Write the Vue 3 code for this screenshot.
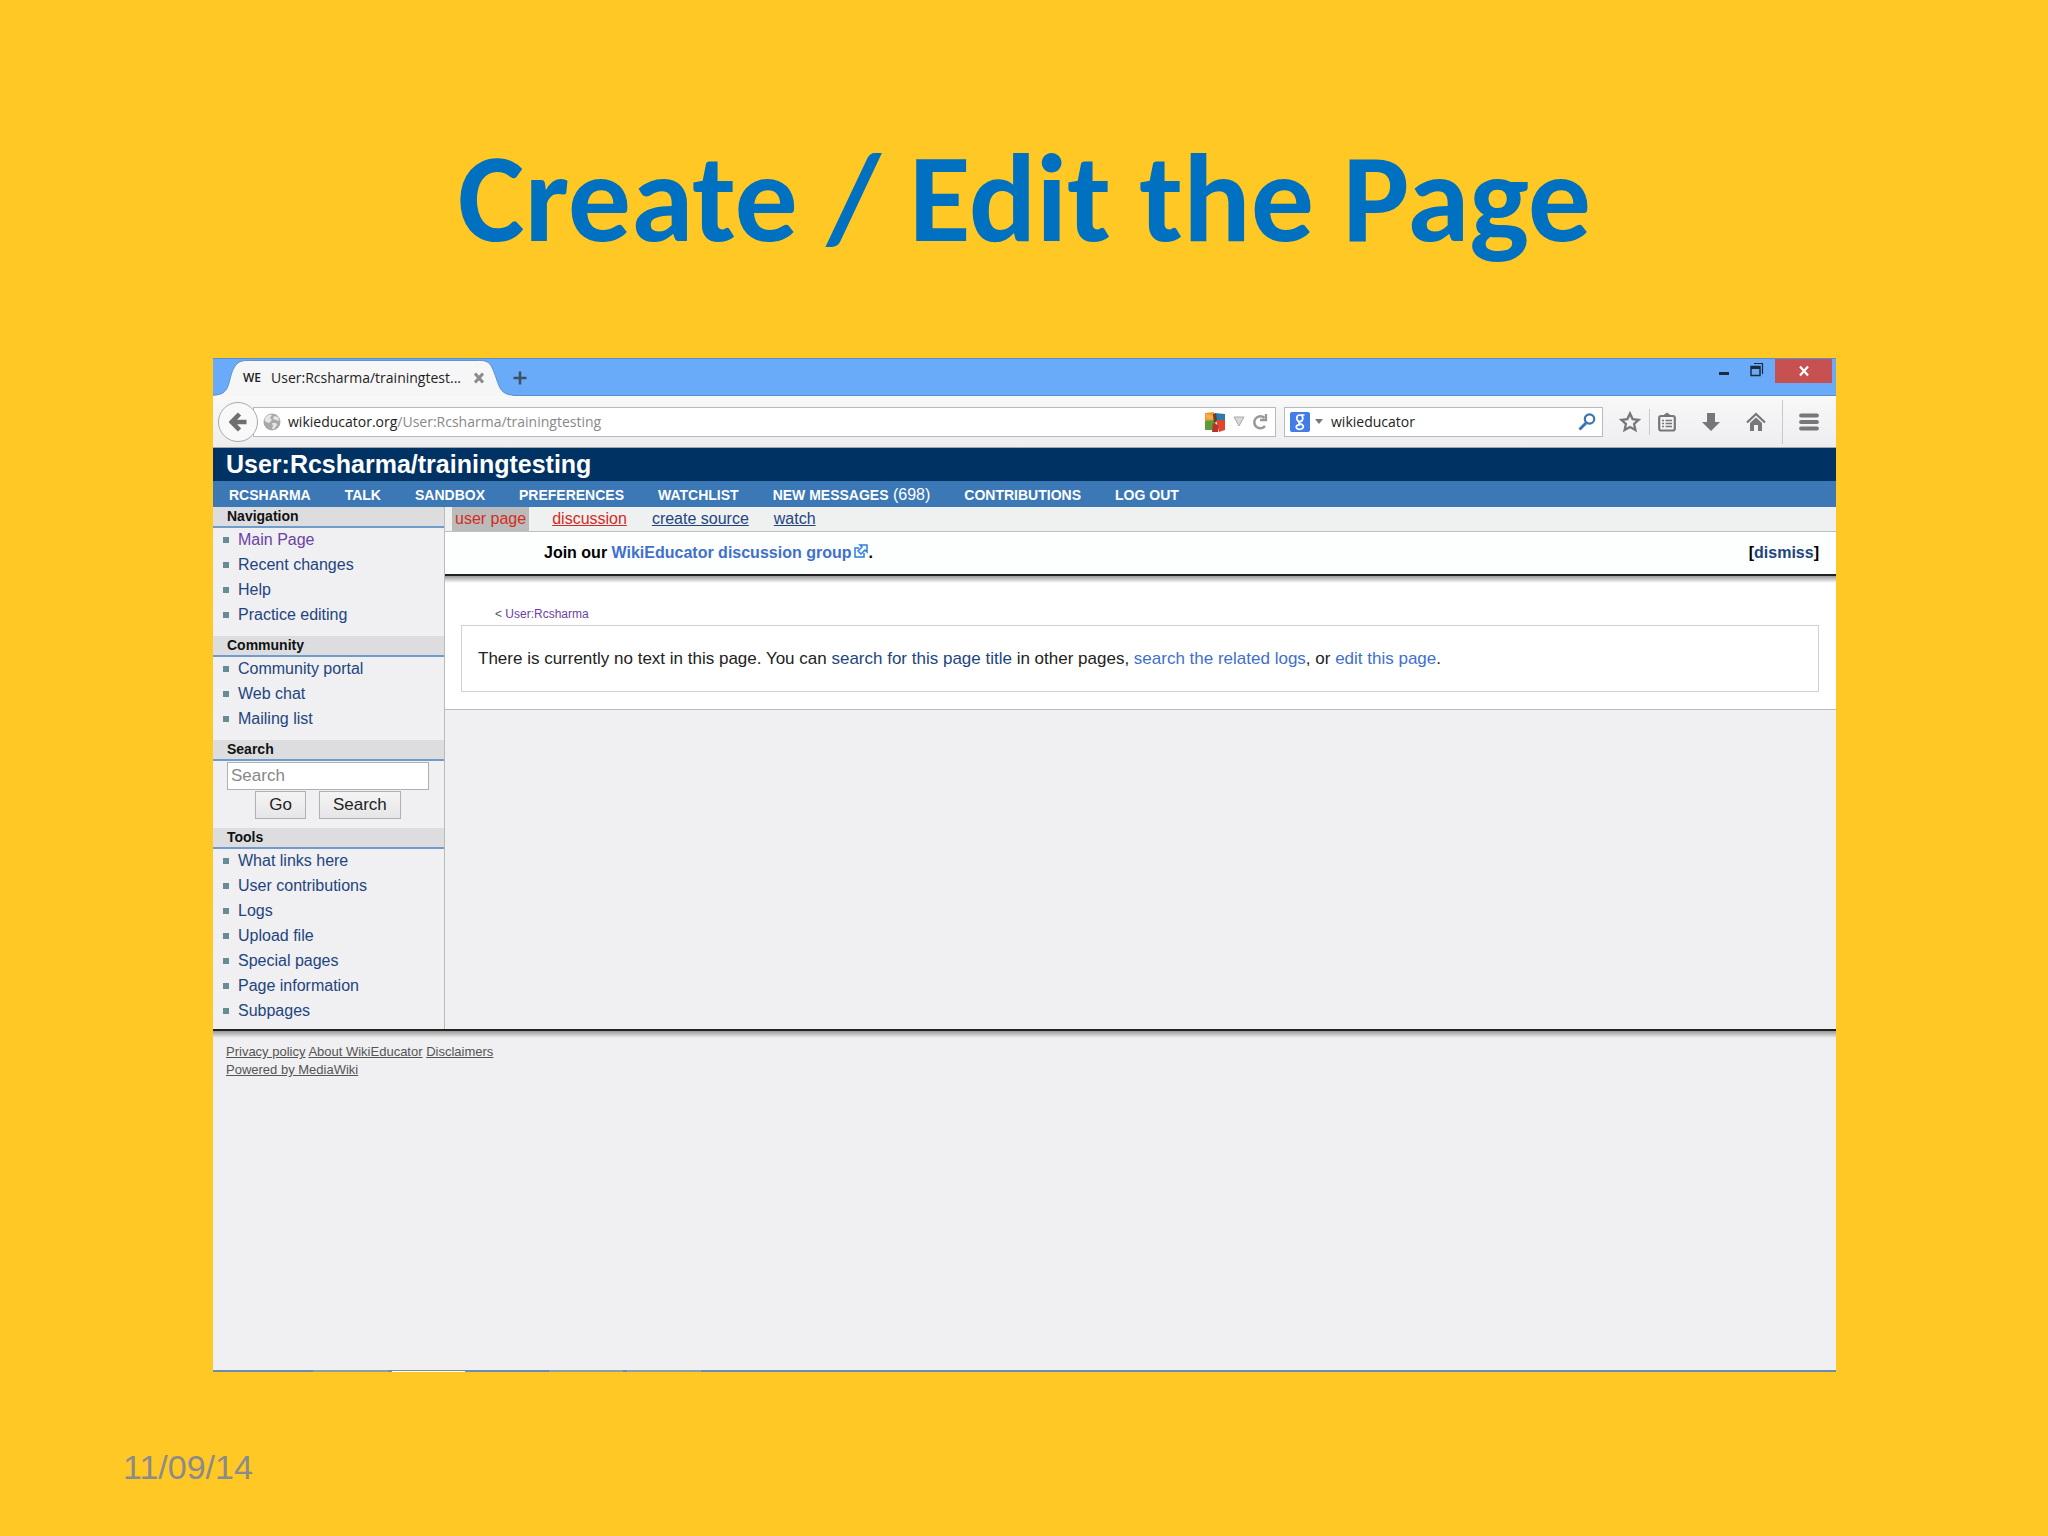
<script setup>
import { ref } from 'vue';

const engineQuery = ref('wikieducator');
const wikiQuery = ref('');

const personal = ['RCSHARMA', 'TALK', 'SANDBOX', 'PREFERENCES', 'WATCHLIST', 'NEW MESSAGES', 'CONTRIBUTIONS', 'LOG OUT'];

const navigation = ['Main Page', 'Recent changes', 'Help', 'Practice editing'];
const community = ['Community portal', 'Web chat', 'Mailing list'];
const tools = ['What links here', 'User contributions', 'Logs', 'Upload file', 'Special pages', 'Page information', 'Subpages'];

// top edge of the taskbar, one entry per visible button or gap
const taskbar = [
  { grow: 100, kind: 'dark' },
  { grow: 75, kind: 'light' },
  { grow: 4, kind: 'dark' },
  { grow: 73, kind: 'white' },
  { grow: 84, kind: 'dark' },
  { grow: 74, kind: 'light' },
  { grow: 4, kind: 'dark' },
  { grow: 74, kind: 'light' },
  { grow: 1135, kind: 'dark' },
];
</script>

<template>
  <main class="slide">
    <h1 class="slide-title">Create / Edit the Page</h1>

    <section class="window">
      <div class="titlebar">
        <div class="tab">
          <svg class="tab-shape" viewBox="0 0 306 38" preserveAspectRatio="none" aria-hidden="true">
            <path d="M0 37.500C18 37 15 24 20 12C24 3 28 1.500 36 1.500H272C280 1.500 283 4 286 12C292 26 291 36 306 37.500V38H0Z" fill="#f6f6f7" />
            <path d="M0 37C18 37 15 24 20 12C24 3 28 1.500 36 1.500H272C280 1.500 283 4 286 12C292 26 291 36 306 37" fill="none" stroke="#5c8fca" />
          </svg>
          <span class="favicon">WE</span>
          <span class="tab-label">User:Rcsharma/trainingtest...</span>
          <button class="bare tab-close" aria-label="Close tab">
            <svg width="12" height="12" viewBox="0 0 12 12"><path d="M2 1.500L10 10.500M10 1.500L2 10.500" stroke="#8b8b8b" stroke-width="3" /></svg>
          </button>
        </div>
        <button class="bare new-tab" aria-label="New tab">
          <svg width="14" height="14" viewBox="0 0 14 14"><path d="M7 0.500V13.500M0.500 7H13.500" stroke="#3c5066" stroke-width="2.500" /></svg>
        </button>
        <div class="controls">
          <button class="bare minimize" aria-label="Minimize">
            <svg width="12" height="24" viewBox="0 0 12 24"><path d="M1 14.500H11" stroke="#1d2b3d" stroke-width="3" /></svg>
          </button>
          <button class="bare" aria-label="Restore">
            <svg width="14" height="24" viewBox="0 0 14 24" fill="none" stroke="#1d2b3d"><path d="M4 4.500H12.500V15" stroke-width="1.200" /><path d="M1 7.500H10V16.500H1Z" stroke-width="1.500" /><path d="M1 8.500H10" stroke-width="3" /></svg>
          </button>
          <button class="bare close" aria-label="Close window">
            <svg width="12" height="12" viewBox="0 0 12 12"><path d="M2 1.500L10 10.500M10 1.500L2 10.500" stroke="#fff" stroke-width="2.200" /></svg>
          </button>
        </div>
      </div>

      <div class="toolbar">
        <button class="bare back" aria-label="Back">
          <svg width="18" height="20" viewBox="0 0 18 20"><path d="M10.500 2L2.800 10L10.500 18M4 10H17.500" fill="none" stroke="#6f6f72" stroke-width="4.600" /></svg>
        </button>
        <div class="field url">
          <svg width="18" height="18" viewBox="0 0 18 18"><circle cx="9" cy="9" r="8.500" fill="#a9a9ab" /><path d="M2 5C5 1 8 1 9 2L7 5L9 7L6 10L3 9L1.500 7ZM11 3L15 4L16.500 8L13 7L10 6ZM9 10L13 10L14 12L11 16L9 16L10 13Z" fill="#e6e6e7" /></svg>
          <span class="url-text">wikieducator.org<span>/User:Rcsharma/trainingtesting</span></span>
          <svg width="21" height="20" viewBox="0 0 21 20"><path d="M0 1L9 0V9L0 10Z" fill="#ee9830" /><path d="M10 1L20 2V9L11 8Z" fill="#2a7cac" /><path d="M11 8L20 8V18L14 20Z" fill="#e2452c" /><path d="M0 9L10 8L12 18L0 18Z" fill="#5b9b38" /><path d="M8 11L13 13L13 20H7Z" fill="#b3352a" /><path d="M8 2L11 1L12 9L9 11Z" fill="#6b3b30" /><path d="M1 2L8 4L7 8L1 6Z" fill="#f4b04a" /></svg>
          <svg width="12" height="11" viewBox="0 0 12 11"><path d="M1 1H11L6 10Z" fill="#d8d8d8" stroke="#aaa" /></svg>
          <button class="bare" aria-label="Reload">
            <svg width="16" height="16" viewBox="0 0 16 16" fill="none" stroke="#98989b" stroke-width="2.500"><path d="M13 12A6 6 0 1 1 12.500 4" /><path d="M14 0V6H8" stroke-width="2.300" /></svg>
          </button>
        </div>
        <div class="field engine">
          <svg width="20" height="20" viewBox="0 0 20 20"><rect width="20" height="20" rx="2" fill="#437be8" /><g fill="none" stroke="#fff" stroke-width="1.700"><ellipse cx="9.800" cy="6.300" rx="3" ry="3.300" /><path d="M11 3H14.500M9.500 9.600C7.500 11 10 11.500 11.500 12.300C15 14.500 13 17.500 9.500 17.300C5 17 5 12.800 10.500 12.600" /></g></svg>
          <svg width="8" height="5" viewBox="0 0 8 5"><path d="M0 0H8L4 5Z" fill="#77777a" /></svg>
          <input v-model="engineQuery" type="text" aria-label="Search with Google" />
          <button class="bare" aria-label="Start search">
            <svg width="18" height="18" viewBox="0 0 18 18" fill="none" stroke="#3b73b5"><circle cx="11.500" cy="6" r="4.700" stroke-width="2.200" /><path d="M8 10L1.500 16.500" stroke-width="3" /></svg>
          </button>
        </div>
        <div class="actions">
          <button class="bare" aria-label="Bookmark">
            <svg width="22" height="22" viewBox="0 0 22 22"><path d="M11 2.500L13.600 8.100L19.600 8.800L15.100 12.900L16.400 19L11 16L5.600 19L6.900 12.900L2.400 8.800L8.400 8.100Z" fill="none" stroke="#77777a" stroke-width="2.300" /></svg>
          </button>
          <i class="divider short"></i>
          <button class="bare" aria-label="Bookmarks list">
            <svg width="18" height="20" viewBox="0 0 18 20" fill="none" stroke="#77777a" stroke-width="2.200"><rect x="1.200" y="4" width="15.600" height="14.500" rx="2" /><path d="M5 4L9 1L13 4Z" fill="#77777a" stroke-width="1" /><path d="M4 8.500H6M7.500 8.500H14M4 11.500H6M7.500 11.500H14M4 14.500H6M7.500 14.500H14" stroke-width="1.600" /></svg>
          </button>
          <button class="bare download" aria-label="Downloads">
            <svg width="18" height="20" viewBox="0 0 18 20"><path d="M5 1H13V10H18L9 19L0 10H5Z" fill="#77777a" /></svg>
          </button>
          <button class="bare home" aria-label="Home">
            <svg width="20" height="20" viewBox="0 0 20 20"><path d="M1 10.500L10 2L19 10.500" fill="none" stroke="#77777a" stroke-width="2.300" /><path d="M4 11L10 5.500L16 11V19H12V13H8V19H4Z" fill="#77777a" /></svg>
          </button>
          <i class="divider"></i>
          <button class="bare" aria-label="Menu">
            <svg width="20" height="18" viewBox="0 0 20 18"><path d="M2 2.500H18M2 9H18M2 15.500H18" stroke="#77777a" stroke-width="3.800" stroke-linecap="round" /></svg>
          </button>
        </div>
      </div>

      <h2 class="page-name">User:Rcsharma/trainingtesting</h2>
      <nav class="personal">
        <a v-for="item in personal" :key="item" href="#">{{ item }}<span v-if="item === 'NEW MESSAGES'"> (698)</span></a>
      </nav>

      <div class="columns">
        <aside class="sidebar">
          <h3>Navigation</h3>
          <ul>
            <li v-for="item in navigation" :key="item"><a href="#" :class="{ visited: item === 'Main Page' }">{{ item }}</a></li>
          </ul>
          <h3>Community</h3>
          <ul>
            <li v-for="item in community" :key="item"><a href="#">{{ item }}</a></li>
          </ul>
          <h3><label for="wiki-search">Search</label></h3>
          <form class="search" @submit.prevent>
            <input id="wiki-search" v-model="wikiQuery" type="text" placeholder="Search" />
            <div class="search-buttons">
              <button type="submit">Go</button>
              <button type="submit">Search</button>
            </div>
          </form>
          <h3>Tools</h3>
          <ul>
            <li v-for="item in tools" :key="item"><a href="#">{{ item }}</a></li>
          </ul>
        </aside>

        <div class="content">
          <nav class="tabs">
            <a href="#" class="missing active">user page</a>
            <a href="#" class="missing">discussion</a>
            <a href="#">create source</a>
            <a href="#">watch</a>
          </nav>
          <div class="notice">
            <p>
              Join our <a href="#">WikiEducator discussion group<svg width="14" height="14" viewBox="0 0 14 14" fill="none" stroke="#2b7de0" stroke-width="1.500"><path d="M5 4H1V13H10V9" /><path d="M6 1H13V8L11 6L7 10L4 7L8 3Z" /></svg></a>.
            </p>
            <span>[<a href="#">dismiss</a>]</span>
          </div>
          <article class="article">
            <p class="crumb">&lt; <a href="#">User:Rcsharma</a></p>
            <p class="empty">
              There is currently no text in this page. You can <a href="#" class="dark">search for this page title</a> in other pages, <a href="#">search the related logs</a>, or <a href="#">edit this page</a>.
            </p>
          </article>
        </div>
      </div>

      <footer class="footer">
        <p><a href="#">Privacy policy</a> <a href="#">About WikiEducator</a> <a href="#">Disclaimers</a></p>
        <p><a href="#">Powered by MediaWiki</a></p>
      </footer>
      <div class="taskbar">
        <i v-for="(part, i) in taskbar" :key="i" :class="part.kind" :style="{ flexGrow: part.grow }"></i>
      </div>
    </section>

    <time class="date" datetime="2014-09-11">11/09/14</time>
  </main>
</template>

<style>
body {
  margin: 0;
  background: #ffc824;
}
</style>

<style scoped>
.slide {
  box-sizing: border-box;
  display: flex;
  flex-direction: column;
  min-height: 100vh;
  padding: 128px 212px 49px 213px;
  background: #ffc824;
  font-family: "Liberation Sans", Arial, sans-serif;
  font-size: 16px;
}

h1,
h2,
h3,
p,
ul {
  margin: 0;
  padding: 0;
}

a {
  color: #1d4580;
  text-decoration: none;
}

svg {
  display: block;
  flex: none;
}

.bare {
  display: flex;
  align-items: center;
  justify-content: center;
  padding: 0;
  border: 0;
  background: none;
}

.slide-title {
  height: 230px;
  color: #0070c0;
  font: 700 126px/140px Carlito, Lato, sans-serif;
  text-align: center;
}

.window {
  display: flex;
  flex-direction: column;
  flex: 1;
  background: #f0eff1;
}

.titlebar {
  box-sizing: border-box;
  display: flex;
  height: 38px;
  border-top: 1px solid #5c8fca;
  background: #6aabf9;
  box-shadow: inset 0 -1px #5c8fca;
}

.tab {
  position: relative;
  display: flex;
  align-items: center;
  width: 300px;
  color: #222;
  font: 14px "Open Sans", sans-serif;
}

.tab-shape {
  position: absolute;
  inset: 0;
  width: 100%;
  height: 100%;
}

.favicon {
  position: relative;
  width: 28px;
  margin-left: 30px;
  font-size: 12px;
  font-weight: 600;
}

.tab-label {
  position: relative;
  flex: 1;
  white-space: nowrap;
}

.tab-close {
  position: relative;
  margin-right: 28px;
}

.controls {
  display: flex;
  align-items: flex-start;
  gap: 11px;
  margin-left: auto;
  padding-right: 4px;
}

.minimize {
  margin-right: 9px;
}

.close {
  width: 57px;
  height: 24px;
  background: #c75050;
}

.toolbar {
  box-sizing: border-box;
  display: flex;
  align-items: center;
  height: 52px;
  padding: 0 17px 0 5px;
  border-bottom: 1px solid #a5a5aa;
  background: linear-gradient(#f8f8f9, #eeeef0);
}

.back {
  box-sizing: border-box;
  z-index: 1;
  width: 40px;
  height: 40px;
  border: 1px solid #aaa;
  border-radius: 50%;
  background: #f9f9fa;
}

.field {
  box-sizing: border-box;
  display: flex;
  align-items: center;
  height: 30px;
  border: 1px solid #b9b9bb;
  background: #fff;
  font: 14px "Open Sans", sans-serif;
}

.url {
  flex: 1;
  gap: 7px;
  margin-left: -5px;
  padding: 0 7px 0 9px;
}

.url-text {
  flex: 1;
  color: #222;
}

.url-text span {
  color: #888;
}

.engine {
  width: 319px;
  gap: 5px;
  margin-left: 8px;
  padding: 0 6px 0 5px;
}

.engine input {
  flex: 1;
  min-width: 0;
  padding: 0 3px;
  border: 0;
  outline: 0;
  background: none;
  color: #222;
  font: inherit;
}

.actions {
  display: flex;
  align-items: center;
  margin-left: 16px;
}

.divider {
  width: 1px;
  height: 44px;
  margin: 0 16px;
  background: #c9c9cc;
}

.divider.short {
  height: 26px;
  margin: 0 8px;
}

.download,
.home {
  margin-left: 26px;
}

.page-name {
  padding-left: 13px;
  background: #003264;
  color: #fff;
  font-size: 25px;
  line-height: 33px;
}

.personal {
  display: flex;
  gap: 34px;
  height: 26px;
  padding-left: 16px;
  background: #3c78b5;
  font-size: 14px;
  font-weight: 700;
  line-height: 28px;
  white-space: nowrap;
}

.personal a {
  color: #fff;
}

.personal span {
  font-size: 16px;
  font-weight: 400;
}

.columns {
  display: flex;
}

.sidebar {
  box-sizing: border-box;
  width: 232px;
  border-right: 1px solid #bbb;
}

.sidebar h3 {
  padding-left: 14px;
  border-bottom: 2px solid #6f9ccb;
  background: #dddddf;
  color: #111;
  font-size: 14px;
  line-height: 19px;
}

.sidebar ul {
  margin-top: -1px;
  padding-bottom: 9px;
  list-style: none;
}

.sidebar ul:last-child {
  padding-bottom: 6px;
}

.sidebar li {
  display: flex;
  align-items: center;
  gap: 9px;
  padding-left: 10px;
  line-height: 25px;
}

.sidebar li::before {
  width: 6px;
  height: 6px;
  background: #668c96;
  content: "";
}

.sidebar a.visited,
.crumb a {
  color: #6a41a5;
}

.search {
  padding: 1px 15px 9px 14px;
}

.search input {
  box-sizing: border-box;
  display: block;
  width: 100%;
  height: 28px;
  padding: 0 3px;
  border: 1px solid #b0b0b2;
  background: #fff;
  font: 17px "Liberation Sans", Arial, sans-serif;
}

.search input::placeholder {
  color: #888;
}

.search-buttons {
  display: flex;
  justify-content: center;
  gap: 13px;
  padding-top: 1px;
}

.search-buttons button {
  height: 28px;
  padding: 0 13px;
  border: 1px solid #b0b0b2;
  background: linear-gradient(#f4f4f4, #e6e6e8);
  color: #222;
  font: 17px "Liberation Sans", Arial, sans-serif;
}

.content {
  flex: 1;
}

.tabs {
  display: flex;
  gap: 21px;
  padding-left: 7px;
  border-bottom: 1px solid #c0c0c2;
  background: #eff0f0;
  line-height: 24px;
}

.tabs a {
  padding: 0 2px;
  text-decoration: underline;
}

.tabs .missing {
  color: #d32b1e;
}

.tabs .active {
  padding: 0 3px;
  background: #bbb;
  text-decoration: none;
}

.notice {
  display: flex;
  justify-content: space-between;
  padding: 0 17px 0 99px;
  border-bottom: 2px solid #222;
  background: #fdfefe;
  font-weight: 700;
  line-height: 42px;
}

.notice p a {
  color: #4070cc;
}

.notice svg {
  display: inline-block;
  margin-left: 3px;
}

.article {
  padding: 28px 17px 17px 16px;
  border-bottom: 1px solid #bbb;
  background: linear-gradient(#999, #fff 7px);
}

.crumb {
  padding-left: 34px;
  color: #555;
  font-size: 12px;
  line-height: 21px;
}

.empty {
  padding: 0 16px;
  border: 1px solid #cfcfd4;
  color: #222;
  font-size: 17px;
  line-height: 65px;
}

.empty a {
  color: #4070cc;
}

.empty .dark {
  color: #1d4580;
}

.footer {
  flex: 1;
  padding: 12px 13px;
  border-top: 2px solid #222;
  background: linear-gradient(#999, #f0eff1 7px);
  font-size: 13px;
  line-height: 18px;
}

.footer a {
  color: #555;
  text-decoration: underline;
}

.taskbar {
  display: flex;
  height: 2px;
}

.taskbar .dark {
  background: #6c8cb4;
}

.taskbar .light {
  background: #8ba0a4;
}

.taskbar .white {
  background: linear-gradient(#7c8c90 1px, #fff 1px);
}

.date {
  margin: 75px 0 0 -90px;
  color: #8b8b8b;
  font-size: 34px;
  line-height: 40px;
}
</style>
